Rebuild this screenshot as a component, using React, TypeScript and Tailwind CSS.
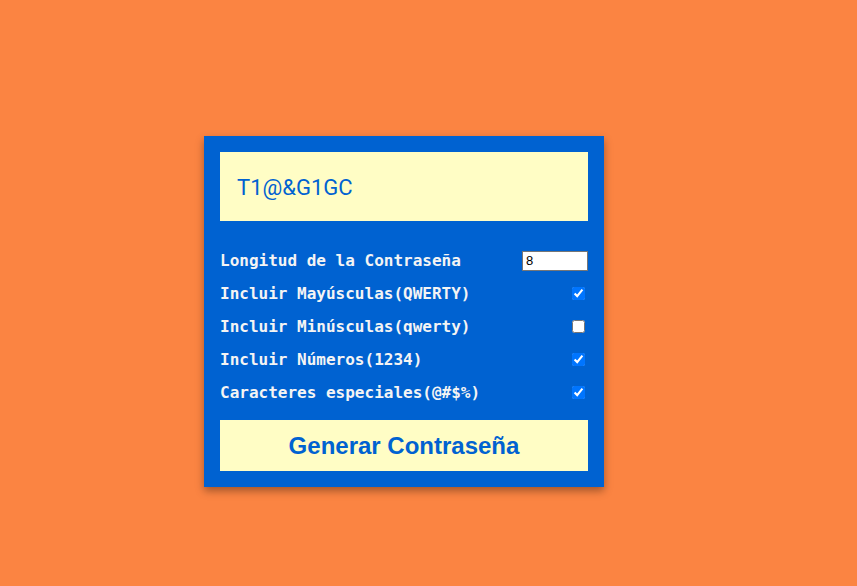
import React, { useState } from "react";

const options = [
  { id: "upper", label: "Incluir Mayúsculas(QWERTY)", checked: true },
  { id: "lower", label: "Incluir Minúsculas(qwerty)", checked: false },
  { id: "numbers", label: "Incluir Números(1234)", checked: true },
  { id: "special", label: "Caracteres especiales(@#$%)", checked: true },
];

export default function App() {
  const [length, setLength] = useState("8");
  const [checks, setChecks] = useState<Record<string, boolean>>(
    Object.fromEntries(options.map((o) => [o.id, o.checked]))
  );

  return (
    <div className="min-h-[586px] bg-[#fb8442] pl-[204px] pt-[136px]">
      <div className="w-[400px] bg-[#0062d1] p-4 shadow-[0_4px_8px_rgba(0,0,0,0.35)]">
        <div className="flex h-[69px] items-center bg-[#fffdc5] px-[17px] pt-[2px] font-['Roboto',sans-serif] text-[22px] text-[#0062d1]">
          T1@&G1GC
        </div>

        <div className="mt-[23px] flex flex-col font-['DejaVu_Sans_Mono',monospace] text-[16px] font-bold text-[#f4f4f4]">
          <div className="flex h-[33px] items-center justify-between">
            <label htmlFor="len">Longitud de la Contraseña</label>
            <input
              id="len"
              type="number"
              value={length}
              onChange={(e) => setLength(e.target.value)}
              className="h-[20px] w-[66px] border border-[#767676] bg-white px-[3px] font-['Liberation_Sans',sans-serif] text-[13px] font-normal text-black"
            />
          </div>
          {options.map((o) => (
            <div key={o.id} className="flex h-[33px] items-center justify-between">
              <label htmlFor={o.id}>{o.label}</label>
              <input
                id={o.id}
                type="checkbox"
                checked={checks[o.id]}
                onChange={(e) => setChecks({ ...checks, [o.id]: e.target.checked })}
                className="mr-[3px] h-[13px] w-[13px]"
              />
            </div>
          ))}
        </div>

        <button className="mt-[11px] flex h-[51px] w-full items-center justify-center bg-[#fffdc5] font-['Liberation_Sans',sans-serif] text-[24px] font-bold text-[#0062d1]">
          Generar Contraseña
        </button>
      </div>
    </div>
  );
}
